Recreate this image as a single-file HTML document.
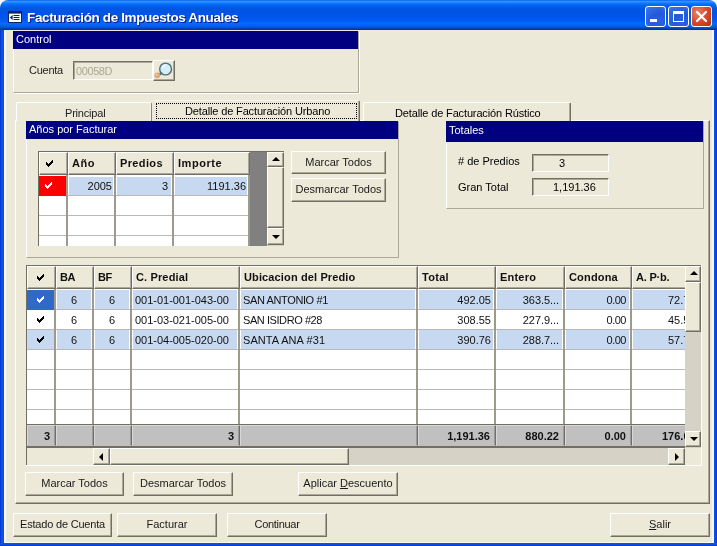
<!DOCTYPE html>
<html>
<head>
<meta charset="utf-8">
<title>Facturación de Impuestos Anuales</title>
<style>
*{box-sizing:border-box;margin:0;padding:0}
html,body{width:717px;height:546px;overflow:hidden;background:#ECE9D8}
body{font-family:"Liberation Sans",sans-serif;font-size:11px;color:#000;position:relative}
.abs,.win *{position:absolute}
.win{will-change:transform;position:absolute;left:0;top:0;width:717px;height:546px;background:#ECE9D8;overflow:hidden}
/* window frame */
.titlebar{left:0;top:0;width:717px;height:30px;border-radius:8px 8px 0 0;
 background:linear-gradient(to bottom,#0058EE 0%,#3593FF 4%,#288EFF 7%,#127DFF 10%,#036FFC 14%,#0262EE 20%,#0057E5 28%,#0054E3 40%,#0055EB 58%,#005BF5 68%,#026AFE 78%,#0062EF 86%,#0052D6 92%,#0040AB 96%,#003092 100%)}
.corner{left:0;top:0;width:717px;height:10px;background:#fff}
.bl{left:0;top:30px;width:4px;height:516px;background:linear-gradient(to right,#0030C8 0,#0A48E0 1px,#0F55EA 2px,#0B4CE2 4px)}
.br{left:714px;top:30px;width:3px;height:516px;background:linear-gradient(to left,#0030C8 0,#0A48E0 1px,#0F55EA 2px,#0B4CE2 3px)}
.bb{left:0;top:543px;width:717px;height:3px;background:linear-gradient(to top,#0030C8 0,#0A48E0 1px,#0F55EA 2px,#0B4CE2 3px)}
.ls{background:#F7F6F0}
.title{left:27px;top:10px;font-weight:bold;font-size:13.5px;color:#fff;white-space:nowrap;line-height:16px;text-shadow:1px 1px 0 #0A1883;letter-spacing:-0.37px}
.tbtn{top:6px;width:21px;height:21px;border:1px solid #fff;border-radius:3px;
 background:radial-gradient(circle at 70% 75%,#2a62e8 0,#2458d8 40%,#3a78ee 100%)}
.tbtn.close{background:radial-gradient(circle at 30% 30%,#e9836a 0,#d9492a 50%,#b8300f 100%)}
/* generic */
.hdr{background:#000080;color:#fff;font-size:11px;line-height:16px;white-space:nowrap;padding-left:3px}
.t{white-space:nowrap;line-height:13px;font-size:11px}
.btn{border:1px solid;border-color:#fff #716F64 #716F64 #fff;box-shadow:inset -1px -1px 0 #ACA899;background:#ECE9D8;
 text-align:center;font-size:11px;line-height:21px;white-space:nowrap;color:#1a1a1a}
.etch{border:1px solid;border-color:#ACA899 #fff #fff #ACA899;box-shadow:inset 1px 1px 0 #fff, 1px 1px 0 #ACA899}
.sunk{border:1px solid;border-color:#716F64 #fff #fff #716F64;box-shadow:inset 1px 1px 0 #ACA899}

.tabpanel{border:1px solid;border-color:#fff #716F64 #716F64 #fff;box-shadow:inset -1px -1px 0 #ACA899}
.tab{border:1px solid;border-color:#fff #716F64 transparent #fff;border-bottom:0;border-radius:2px 2px 0 0;background:#ECE9D8;box-shadow:inset -1px 0 0 #ACA899}
.tab.sel{}
.focus{border:1px dotted #000}
.grp{border:1px solid;border-color:#fff #ACA899 #ACA899 #fff}
.grid{background:#fff}

.btn u{position:static}
.ck{overflow:visible}
.hc{background:#ECE9D8;border:1px solid;border-color:#fff #716F64 #716F64 #fff;box-shadow:inset -1px -1px 0 #ACA899}
.ht{font-weight:bold;font-size:11px;line-height:13px;white-space:nowrap;color:#111}
.vsep{background:#9D9A8C}
.hline{height:1px;background:#B9B9B9}
.cell{font-size:11px;line-height:20px;white-space:nowrap;color:#111}
.cell.hl{background:#C6D9F1}
.fc{background:#C0C0C0;border:1px solid;border-color:#D8D8D8 #716F64 #C0C0C0 #D8D8D8;box-shadow:inset -1px 0 0 #9a9a9a}
.ft{right:5px;top:4px;font-weight:bold;font-size:11px;line-height:13px;white-space:nowrap;color:#111}
.sbtrack{background:#D6D3C6}
.sbb{background:#ECE9D8;border:1px solid;border-color:#fff #716F64 #716F64 #fff;box-shadow:inset -1px -1px 0 #ACA899}
i.up{width:0;height:0;border:4px solid transparent;border-top:0;border-bottom:4px solid #000}
i.dn{width:0;height:0;border:4px solid transparent;border-bottom:0;border-top:4px solid #000}
i.lf{width:0;height:0;border:4px solid transparent;border-left:0;border-right:4px solid #000}
i.rt{width:0;height:0;border:4px solid transparent;border-right:0;border-left:4px solid #000}
</style>
</head>
<body>
<div class="win">
 <div class="corner"></div>
 <div class="titlebar"></div>
 <div class="ls" style="left:4px;top:30px;width:2px;height:513px"></div><div class="ls" style="left:712px;top:30px;width:2px;height:513px"></div><div class="ls" style="left:4px;top:542px;width:710px;height:1px"></div>
 <div class="bl"></div><div class="br"></div><div class="bb"></div>
 <!-- app icon -->
 <svg style="left:8px;top:11px" width="14" height="12" viewBox="0 0 14 12">
  <rect x="0.5" y="0.5" width="13" height="11" fill="#fff" stroke="#0A246A"/>
  <rect x="1" y="1" width="12" height="1.6" fill="#0A246A"/>
  <path d="M5.5 4.5h6M5.5 6.5h6M5.5 8.5h6" stroke="#0A246A" stroke-width="1"/>
  <path d="M1.8 6.5l2.8-2.5v5z" fill="#0A246A"/>
 </svg>
 <div class="title">Facturación de Impuestos Anuales</div>
 <div class="tbtn" style="left:645px"><div style="left:4px;top:12px;width:7px;height:3px;background:#fff"></div></div>
 <div class="tbtn" style="left:668px"><div style="left:4px;top:4px;width:11px;height:11px;border:1px solid #fff;border-top-width:3px"></div></div>
 <div class="tbtn close" style="left:691px">
  <svg style="left:0;top:0" width="19" height="19" viewBox="0 0 19 19"><path d="M5 5l9 9M14 5l-9 9" stroke="#fff" stroke-width="2.2" stroke-linecap="round"/></svg>
 </div>

 <!-- Control panel -->
 <div style="left:13px;top:31px;width:346px;height:62px;border:1px solid;border-color:#fff #ACA899 #ACA899 #fff;box-shadow:1px 1px 0 #fff"></div>
 <div class="hdr" style="left:13px;top:31px;width:345px;height:18px">Control</div>
 <div class="t" style="left:29px;top:64px;color:#222;letter-spacing:-0.25px">Cuenta</div>
 <div class="sunk" style="left:73px;top:61px;width:80px;height:19px"></div>
 <div class="t" style="left:76px;top:65px;color:#ACA899;letter-spacing:-0.4px">00058D</div>
 <div class="btn" style="left:153px;top:60px;width:22px;height:21px"></div>
 <svg style="left:153px;top:60px" width="22" height="21" viewBox="0 0 22 21">
  <circle cx="12.6" cy="9" r="5.9" fill="#D2EFFB" stroke="#4F6B77" stroke-width="1.4"/>
  <path d="M9.6 7.6a3.4 3.4 0 0 1 3-2.6" stroke="#fff" stroke-width="1.2" fill="none"/>
  <path d="M8.2 13.2L5.6 15.4" stroke="#566F7A" stroke-width="2.4" stroke-linecap="round"/>
  <circle cx="4.2" cy="15.3" r="2.9" fill="#E3A772"/>
  <circle cx="3.6" cy="14.6" r="1.1" fill="#F3CBA4"/>
 </svg>

 <!-- Tabs -->
 <div class="tabpanel" style="left:15px;top:120px;width:695px;height:384px"></div>
 <div class="tab" style="left:16px;top:102px;width:136px;height:19px;border-right-color:#8A8778;box-shadow:inset -1px 0 0 #F4F3EC"><span class="t" style="left:48px;top:4px;letter-spacing:-0.2px;color:#222">Principal</span></div>
 <div class="tab" style="left:363px;top:102px;width:208px;height:19px"><span class="t" style="left:31px;top:4px;letter-spacing:-0.14px">Detalle de Facturación Rústico</span></div>
 <div class="tab sel" style="left:152px;top:100px;width:208px;height:21px;border-left-color:#ECE9D8;border-top-color:#F4F3EC">
  <div class="focus" style="left:3px;top:2px;width:201px;height:16px"></div>
  <span class="t" style="left:32px;top:4px;letter-spacing:-0.14px">Detalle de Facturación Urbano</span></div>

 <!-- Años por Facturar group -->
 <div class="grp" style="left:26px;top:121px;width:373px;height:137px"></div>
 <div class="hdr" style="left:26px;top:121px;width:372px;height:18px">Años por Facturar</div>
 <div class="grid" style="left:38px;top:151px;width:246px;height:95px"></div>
 <div style="left:38px;top:151px;width:246px;height:1px;background:#716F64"></div>
 <div style="left:38px;top:151px;width:1px;height:95px;background:#716F64"></div>
 <div class="vsep" style="left:66px;top:174px;width:2px;height:72px"></div>
 <div class="vsep" style="left:114px;top:174px;width:2px;height:72px"></div>
 <div class="vsep" style="left:172px;top:174px;width:2px;height:72px"></div>
 <div class="vsep" style="left:248px;top:174px;width:2px;height:72px"></div>
 <div class="hline" style="left:39px;top:195px;width:211px"></div>
 <div class="hline" style="left:39px;top:215px;width:211px"></div>
 <div class="hline" style="left:39px;top:235px;width:211px"></div>
 <div class="vsep" style="left:66px;top:174px;width:2px;height:72px"></div>
 <div class="vsep" style="left:114px;top:174px;width:2px;height:72px"></div>
 <div class="vsep" style="left:172px;top:174px;width:2px;height:72px"></div>
 <div class="vsep" style="left:248px;top:174px;width:2px;height:72px"></div>
 <div style="left:39px;top:176px;width:27px;height:20px;background:#FF0000"></div>
 <svg class="ck" style="left:45px;top:182px" width="7" height="7" viewBox="0 0 7 7" shape-rendering="crispEdges"><path fill="#fff" d="M6 0h1v1h-1zM5 1h2v1h-2zM0 2h1v1h-1zM4 2h3v1h-3zM0 3h2v1h-2zM3 3h3v1h-3zM0 4h5v1h-5zM1 5h3v1h-3zM2 6h1v1h-1z"/></svg>
 <div class="cell hl" style="left:69px;top:177px;width:44px;height:18px;line-height:18px;text-align:right;padding-right:1px">2005</div>
 <div class="cell hl" style="left:117px;top:177px;width:54px;height:18px;line-height:18px;text-align:right;padding-right:3px">3</div>
 <div class="cell hl" style="left:175px;top:177px;width:72px;height:18px;line-height:18px;text-align:right;padding-right:1px">1191.36</div>
 <div class="hc" style="left:39px;top:152px;width:29px;height:23px"></div>
 <div class="hc" style="left:68px;top:152px;width:48px;height:23px"><span class="ht" style="left:3px;top:4px;letter-spacing:0.55px">Año</span></div>
 <div class="hc" style="left:116px;top:152px;width:58px;height:23px"><span class="ht" style="left:3px;top:4px;letter-spacing:0.37px">Predios</span></div>
 <div class="hc" style="left:174px;top:152px;width:76px;height:23px"><span class="ht" style="left:3px;top:4px;letter-spacing:0.54px">Importe</span></div>
 <svg class="ck" style="left:46px;top:160px" width="7" height="7" viewBox="0 0 7 7" shape-rendering="crispEdges"><path fill="#000" d="M6 0h1v1h-1zM5 1h2v1h-2zM0 2h1v1h-1zM4 2h3v1h-3zM0 3h2v1h-2zM3 3h3v1h-3zM0 4h5v1h-5zM1 5h3v1h-3zM2 6h1v1h-1z"/></svg>
 <div style="left:250px;top:152px;width:17px;height:94px;background:#808080"></div>
 <div class="sbtrack" style="left:267px;top:152px;width:17px;height:94px"></div>
 <div class="sbb" style="left:267px;top:152px;width:17px;height:15px"><i class="up" style="left:4px;top:4px"></i></div>
 <div class="sbb" style="left:267px;top:228px;width:17px;height:17px"><i class="dn" style="left:4px;top:6px"></i></div>
 <div class="sbb" style="left:267px;top:167px;width:17px;height:61px"></div>
 <div class="btn" style="left:291px;top:151px;width:95px;height:23px">Marcar Todos</div>
 <div class="btn" style="left:291px;top:178px;width:95px;height:24px">Desmarcar Todos</div>

 <!-- Totales group -->
 <div class="grp" style="left:446px;top:121px;width:258px;height:88px"></div>
 <div class="hdr" style="left:446px;top:121px;width:257px;height:21px;line-height:18px">Totales</div>
 <div class="t" style="left:458px;top:155px">#&nbsp;de Predios</div>
 <div class="t" style="left:458px;top:181px">Gran Total</div>
 <div class="sunk" style="left:532px;top:154px;width:77px;height:18px"></div>
 <div class="sunk" style="left:532px;top:178px;width:77px;height:18px"></div>
 <div class="t" style="left:559px;top:157px">3</div>
 <div class="t" style="left:553px;top:181px">1,191.36</div>

 <!-- Main grid -->
 <div class="grid" style="left:26px;top:265px;width:675px;height:183px"></div>
 <div style="left:26px;top:265px;width:675px;height:1px;background:#716F64"></div>
 <div style="left:26px;top:265px;width:1px;height:200px;background:#716F64"></div>
 <div class="hline" style="left:27px;top:309px;width:658px"></div>
 <div class="hline" style="left:27px;top:329px;width:658px"></div>
 <div class="hline" style="left:27px;top:349px;width:658px"></div>
 <div class="hline" style="left:27px;top:369px;width:658px"></div>
 <div class="hline" style="left:27px;top:389px;width:658px"></div>
 <div class="hline" style="left:27px;top:409px;width:658px"></div>
 <div class="vsep" style="left:54px;top:288px;width:2px;height:137px"></div>
 <div class="vsep" style="left:92px;top:288px;width:2px;height:137px"></div>
 <div class="vsep" style="left:130px;top:288px;width:2px;height:137px"></div>
 <div class="vsep" style="left:238px;top:288px;width:2px;height:137px"></div>
 <div class="vsep" style="left:416px;top:288px;width:2px;height:137px"></div>
 <div class="vsep" style="left:494px;top:288px;width:2px;height:137px"></div>
 <div class="vsep" style="left:563px;top:288px;width:2px;height:137px"></div>
 <div class="vsep" style="left:630px;top:288px;width:2px;height:137px"></div>
 <div style="left:27px;top:290px;width:27px;height:20px;background:#316AC5"></div>
 <svg class="ck" style="left:37px;top:296px" width="7" height="7" viewBox="0 0 7 7" shape-rendering="crispEdges"><path fill="#fff" d="M6 0h1v1h-1zM5 1h2v1h-2zM0 2h1v1h-1zM4 2h3v1h-3zM0 3h2v1h-2zM3 3h3v1h-3zM0 4h5v1h-5zM1 5h3v1h-3zM2 6h1v1h-1z"/></svg>
 <div class="cell hl" style="left:57px;top:290px;width:34px;height:19px;text-align:center">6</div>
 <div class="cell hl" style="left:95px;top:290px;width:34px;height:19px;text-align:center">6</div>
 <div class="cell hl" style="left:133px;top:290px;width:104px;height:19px;text-align:left;padding-left:2px;letter-spacing:-0.02px">001-01-001-043-00</div>
 <div class="cell hl" style="left:241px;top:290px;width:174px;height:19px;text-align:left;padding-left:2px;letter-spacing:-0.38px">SAN ANTONIO #1</div>
 <div class="cell hl" style="left:419px;top:290px;width:74px;height:19px;text-align:right;padding-right:2px">492.05</div>
 <div class="cell hl" style="left:497px;top:290px;width:65px;height:19px;text-align:right;padding-right:3px;letter-spacing:-0.06px">363.5...</div>
 <div class="cell hl" style="left:566px;top:290px;width:63px;height:19px;text-align:right;padding-right:3px;letter-spacing:-0.5px">0.00</div>
 <div class="cell hl" style="left:633px;top:290px;width:52px;height:19px;text-align:left;padding-left:35px;overflow:hidden">72.71</div>
 <svg class="ck" style="left:37px;top:316px" width="7" height="7" viewBox="0 0 7 7" shape-rendering="crispEdges"><path fill="#000" d="M6 0h1v1h-1zM5 1h2v1h-2zM0 2h1v1h-1zM4 2h3v1h-3zM0 3h2v1h-2zM3 3h3v1h-3zM0 4h5v1h-5zM1 5h3v1h-3zM2 6h1v1h-1z"/></svg>
 <div class="cell" style="left:57px;top:310px;width:34px;height:19px;text-align:center">6</div>
 <div class="cell" style="left:95px;top:310px;width:34px;height:19px;text-align:center">6</div>
 <div class="cell" style="left:133px;top:310px;width:104px;height:19px;text-align:left;padding-left:2px;letter-spacing:-0.02px">001-03-021-005-00</div>
 <div class="cell" style="left:241px;top:310px;width:174px;height:19px;text-align:left;padding-left:2px;letter-spacing:-0.43px">SAN ISIDRO #28</div>
 <div class="cell" style="left:419px;top:310px;width:74px;height:19px;text-align:right;padding-right:2px">308.55</div>
 <div class="cell" style="left:497px;top:310px;width:65px;height:19px;text-align:right;padding-right:3px;letter-spacing:-0.06px">227.9...</div>
 <div class="cell" style="left:566px;top:310px;width:63px;height:19px;text-align:right;padding-right:3px;letter-spacing:-0.5px">0.00</div>
 <div class="cell" style="left:633px;top:310px;width:52px;height:19px;text-align:left;padding-left:35px;overflow:hidden">45.59</div>
 <div class="cell hl" style="left:27px;top:330px;width:27px;height:19px"></div>
 <svg class="ck" style="left:37px;top:336px" width="7" height="7" viewBox="0 0 7 7" shape-rendering="crispEdges"><path fill="#000" d="M6 0h1v1h-1zM5 1h2v1h-2zM0 2h1v1h-1zM4 2h3v1h-3zM0 3h2v1h-2zM3 3h3v1h-3zM0 4h5v1h-5zM1 5h3v1h-3zM2 6h1v1h-1z"/></svg>
 <div class="cell hl" style="left:57px;top:330px;width:34px;height:19px;text-align:center">6</div>
 <div class="cell hl" style="left:95px;top:330px;width:34px;height:19px;text-align:center">6</div>
 <div class="cell hl" style="left:133px;top:330px;width:104px;height:19px;text-align:left;padding-left:2px;letter-spacing:-0.02px">001-04-005-020-00</div>
 <div class="cell hl" style="left:241px;top:330px;width:174px;height:19px;text-align:left;padding-left:2px;letter-spacing:0.08px">SANTA ANA #31</div>
 <div class="cell hl" style="left:419px;top:330px;width:74px;height:19px;text-align:right;padding-right:2px">390.76</div>
 <div class="cell hl" style="left:497px;top:330px;width:65px;height:19px;text-align:right;padding-right:3px;letter-spacing:-0.06px">288.7...</div>
 <div class="cell hl" style="left:566px;top:330px;width:63px;height:19px;text-align:right;padding-right:3px;letter-spacing:-0.5px">0.00</div>
 <div class="cell hl" style="left:633px;top:330px;width:52px;height:19px;text-align:left;padding-left:35px;overflow:hidden">57.75</div>
 <div class="hc" style="left:27px;top:266px;width:29px;height:23px"></div>
 <div class="hc" style="left:56px;top:266px;width:38px;height:23px"><span class="ht" style="left:3px;top:4px;letter-spacing:-0.5px">BA</span></div>
 <div class="hc" style="left:94px;top:266px;width:38px;height:23px"><span class="ht" style="left:3px;top:4px;letter-spacing:-0.5px">BF</span></div>
 <div class="hc" style="left:132px;top:266px;width:108px;height:23px"><span class="ht" style="left:3px;top:4px;letter-spacing:0.14px">C. Predial</span></div>
 <div class="hc" style="left:240px;top:266px;width:178px;height:23px"><span class="ht" style="left:3px;top:4px;letter-spacing:0.13px">Ubicacion del Predio</span></div>
 <div class="hc" style="left:418px;top:266px;width:78px;height:23px"><span class="ht" style="left:3px;top:4px;letter-spacing:0.28px">Total</span></div>
 <div class="hc" style="left:496px;top:266px;width:69px;height:23px"><span class="ht" style="left:3px;top:4px;letter-spacing:0.21px">Entero</span></div>
 <div class="hc" style="left:565px;top:266px;width:67px;height:23px"><span class="ht" style="left:3px;top:4px;letter-spacing:0.17px">Condona</span></div>
 <div class="hc" style="left:632px;top:266px;width:58px;height:23px"><span class="ht" style="left:3px;top:4px;letter-spacing:-0.21px">A. P·b.</span></div>
 <svg class="ck" style="left:37px;top:274px" width="7" height="7" viewBox="0 0 7 7" shape-rendering="crispEdges"><path fill="#000" d="M6 0h1v1h-1zM5 1h2v1h-2zM0 2h1v1h-1zM4 2h3v1h-3zM0 3h2v1h-2zM3 3h3v1h-3zM0 4h5v1h-5zM1 5h3v1h-3zM2 6h1v1h-1z"/></svg>
 <div style="left:26px;top:424px;width:659px;height:1px;background:#716F64"></div>
 <div style="left:26px;top:446px;width:659px;height:2px;background:#716F64"></div>
 <div class="fc" style="left:27px;top:425px;width:29px;height:21px"><span class="ft" style="">3</span></div>
 <div class="fc" style="left:56px;top:425px;width:38px;height:21px"><span class="ft" style=""></span></div>
 <div class="fc" style="left:94px;top:425px;width:38px;height:21px"><span class="ft" style=""></span></div>
 <div class="fc" style="left:132px;top:425px;width:108px;height:21px"><span class="ft" style="">3</span></div>
 <div class="fc" style="left:240px;top:425px;width:178px;height:21px"><span class="ft" style=""></span></div>
 <div class="fc" style="left:418px;top:425px;width:78px;height:21px"><span class="ft" style="">1,191.36</span></div>
 <div class="fc" style="left:496px;top:425px;width:69px;height:21px"><span class="ft" style="">880.22</span></div>
 <div class="fc" style="left:565px;top:425px;width:67px;height:21px"><span class="ft" style="">0.00</span></div>
 <div class="fc" style="left:632px;top:425px;width:58px;height:21px"><span class="ft" style="left:29px;right:auto">176.05</span></div>
 <div class="sbtrack" style="left:685px;top:266px;width:16px;height:182px"></div>
 <div class="sbb" style="left:685px;top:266px;width:16px;height:16px"><i class="up" style="left:4px;top:4px"></i></div>
 <div class="sbb" style="left:685px;top:282px;width:16px;height:50px"></div>
 <div class="sbb" style="left:685px;top:431px;width:16px;height:16px"><i class="dn" style="left:4px;top:5px"></i></div>
 <div style="left:27px;top:448px;width:66px;height:17px;background:#ECE9D8"></div>
 <div class="sbtrack" style="left:93px;top:448px;width:592px;height:17px"></div>
 <div class="sbb" style="left:93px;top:448px;width:17px;height:17px"><i class="lf" style="left:5px;top:4px"></i></div>
 <div class="sbb" style="left:110px;top:448px;width:239px;height:17px"></div>
 <div class="sbb" style="left:668px;top:448px;width:17px;height:17px"><i class="rt" style="left:6px;top:4px"></i></div>
 <div style="left:685px;top:448px;width:16px;height:17px;background:#ECE9D8"></div>
 <div style="left:26px;top:465px;width:675px;height:1px;background:#fff"></div>
 <div style="left:701px;top:265px;width:1px;height:201px;background:#fff"></div>

 <!-- bottom buttons -->
 <div class="btn" style="left:25px;top:472px;width:99px;height:24px;line-height:21px">Marcar Todos</div>
 <div class="btn" style="left:133px;top:472px;width:100px;height:24px;line-height:21px">Desmarcar Todos</div>
 <div class="btn" style="left:298px;top:472px;width:100px;height:24px;line-height:21px">Aplicar <u>D</u>escuento</div>
 <div class="btn" style="left:13px;top:513px;width:99px;height:24px;line-height:21px;letter-spacing:-0.2px">Estado de Cuenta</div>
 <div class="btn" style="left:117px;top:513px;width:100px;height:24px;line-height:21px">Facturar</div>
 <div class="btn" style="left:227px;top:513px;width:100px;height:24px;line-height:21px;letter-spacing:-0.3px">Continuar</div>
 <div class="btn" style="left:610px;top:513px;width:100px;height:24px;line-height:21px"><u>S</u>alir</div>

</div>
</body>
</html>
